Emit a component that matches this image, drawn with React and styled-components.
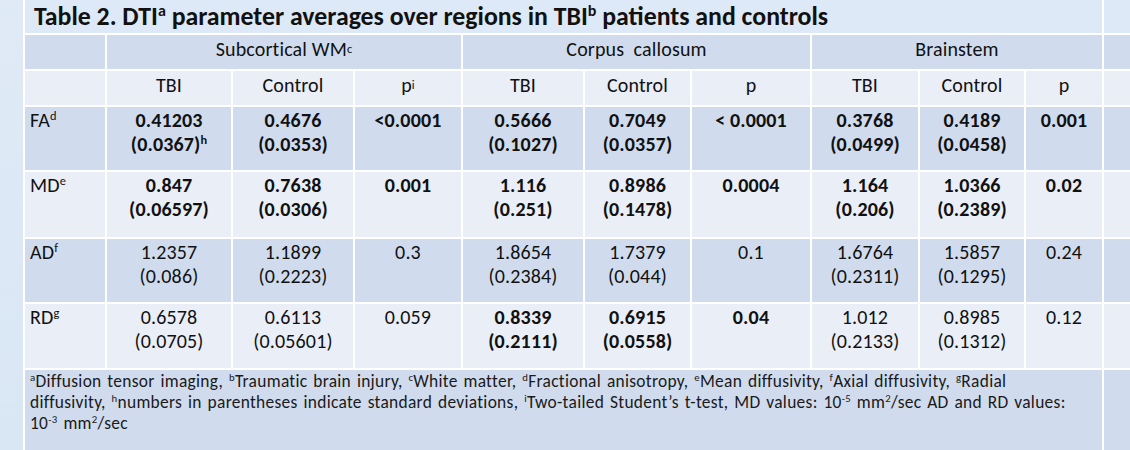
import React from "react";
import styled, { createGlobalStyle } from "styled-components";

const GlobalStyle = createGlobalStyle`
  html, body {
    margin: 0;
    padding: 0;
    background: #ffffff;
  }
  body {
    font-family: Carlito, Calibri, Lato, "Open Sans", sans-serif;
    color: #111111;
  }
`;

const DARK = "#d0dcee";
const LIGHT = "#e9eef7";

const Sheet = styled.div`
  width: 1130px;
  height: 450px;
  overflow: hidden;
  display: grid;
  grid-template-columns: 23px 80px 124px 120px 106px 120px 105px 118px 106px 104px 76px 1fr;
  grid-template-rows: 33px 34px 34px 63px 65px 63px 64px 1fr;
  gap: 2px;
  background: #ffffff;
`;

const Margin = styled.div`
  grid-column: 1;
  grid-row: 1 / -1;
  background: linear-gradient(180deg, #dfeaf6 0%, #d9e6f4 100%);
`;

const Cell = styled.div`
  background: ${(p) => (p.$dark ? DARK : LIGHT)};
  grid-column: ${(p) => p.$span || "auto"};
  font-size: 20px;
  line-height: 24px;
  letter-spacing: 0.15px;
  text-align: ${(p) => (p.$left ? "left" : "center")};
  font-weight: ${(p) => (p.$bold ? 700 : 400)};
  padding: ${(p) => (p.$top ? "1px 5px 0" : "0 5px 6px")};
  display: ${(p) => (p.$top ? "block" : "flex")};
  align-items: center;
  justify-content: ${(p) => (p.$left ? "flex-start" : "center")};
  white-space: nowrap;
`;

const Title = styled.div`
  grid-column: 2 / 12;
  background: #dde9f6;
  font-weight: 700;
  font-size: 25.8px;
  line-height: 33px;
  padding-left: 9px;
  white-space: nowrap;
`;

const Edge = styled.div`
  background: ${(p) => p.$bg};
`;

const Note = styled.div`
  grid-column: 2 / 12;
  background: ${DARK};
  font-size: 17.4px;
  line-height: 21px;
  letter-spacing: 0.3px;
  word-spacing: 1.6px;
  padding: 1px 5px 0;
  color: #1a1a1a;
  white-space: nowrap;
`;

const Sup = styled.sup`
  font-size: 0.62em;
  line-height: 0;
  vertical-align: 0.55em;
  font-weight: inherit;
`;

const groups = [
  { name: "Subcortical WM", sup: "c", span: "3 / 6" },
  { name: "Corpus  callosum", span: "6 / 9" },
  { name: "Brainstem", span: "9 / 12" },
];

const subHeads = [
  ["TBI"], ["Control"], ["p", "i"],
  ["TBI"], ["Control"], ["p"],
  ["TBI"], ["Control"], ["p"],
];

const rows = [
  {
    label: "FA", sup: "d", dark: true,
    cells: [
      { v: "0.41203", sd: "(0.0367)", sdSup: "h", b: true },
      { v: "0.4676", sd: "(0.0353)", b: true },
      { v: "<0.0001", b: true },
      { v: "0.5666", sd: "(0.1027)", b: true },
      { v: "0.7049", sd: "(0.0357)", b: true },
      { v: "< 0.0001", b: true },
      { v: "0.3768", sd: "(0.0499)", b: true },
      { v: "0.4189", sd: "(0.0458)", b: true },
      { v: "0.001", b: true },
    ],
  },
  {
    label: "MD", sup: "e",
    cells: [
      { v: "0.847", sd: "(0.06597)", b: true },
      { v: "0.7638", sd: "(0.0306)", b: true },
      { v: "0.001", b: true },
      { v: "1.116", sd: "(0.251)", b: true },
      { v: "0.8986", sd: "(0.1478)", b: true },
      { v: "0.0004", b: true },
      { v: "1.164", sd: "(0.206)", b: true },
      { v: "1.0366", sd: "(0.2389)", b: true },
      { v: "0.02", b: true },
    ],
  },
  {
    label: "AD", sup: "f", dark: true,
    cells: [
      { v: "1.2357", sd: "(0.086)" },
      { v: "1.1899", sd: "(0.2223)" },
      { v: "0.3" },
      { v: "1.8654", sd: "(0.2384)" },
      { v: "1.7379", sd: "(0.044)" },
      { v: "0.1" },
      { v: "1.6764", sd: "(0.2311)" },
      { v: "1.5857", sd: "(0.1295)" },
      { v: "0.24" },
    ],
  },
  {
    label: "RD", sup: "g",
    cells: [
      { v: "0.6578", sd: "(0.0705)" },
      { v: "0.6113", sd: "(0.05601)" },
      { v: "0.059" },
      { v: "0.8339", sd: "(0.2111)", b: true },
      { v: "0.6915", sd: "(0.0558)", b: true },
      { v: "0.04", b: true },
      { v: "1.012", sd: "(0.2133)" },
      { v: "0.8985", sd: "(0.1312)" },
      { v: "0.12" },
    ],
  },
];

export default function App() {
  return (
    <>
      <GlobalStyle />
      <Sheet>
        <Margin />
        <Title>
          Table 2. DTI<Sup>a</Sup> parameter averages over regions in TBI<Sup>b</Sup> patients and controls
        </Title>
        <Edge $bg="#dde9f6" />

        <Cell $dark />
        {groups.map((g) => (
          <Cell key={g.name} $dark $span={g.span} style={{ whiteSpace: "pre" }}>
            {g.name}
            {g.sup && <Sup>{g.sup}</Sup>}
          </Cell>
        ))}
        <Edge $bg={DARK} />

        <Cell />
        {subHeads.map(([t, s], i) => (
          <Cell key={i}>
            {t}
            {s && <Sup>{s}</Sup>}
          </Cell>
        ))}
        <Edge $bg={LIGHT} />

        {rows.map((r) => (
          <React.Fragment key={r.label}>
            <Cell $dark={r.dark} $left $top>
              {r.label}
              <Sup>{r.sup}</Sup>
            </Cell>
            {r.cells.map((c, i) => (
              <Cell key={i} $dark={r.dark} $top $bold={c.b}>
                {c.v}
                {c.sd && <br />}
                {c.sd}
                {c.sdSup && <Sup>{c.sdSup}</Sup>}
              </Cell>
            ))}
            <Edge $bg={r.dark ? DARK : LIGHT} />
          </React.Fragment>
        ))}

        <Note>
          <Sup>a</Sup>Diffusion tensor imaging, <Sup>b</Sup>Traumatic brain injury, <Sup>c</Sup>White matter,{" "}
          <Sup>d</Sup>Fractional anisotropy, <Sup>e</Sup>Mean diffusivity, <Sup>f</Sup>Axial diffusivity,{" "}
          <Sup>g</Sup>Radial
          <br />
          diffusivity, <Sup>h</Sup>numbers in parentheses indicate standard deviations, <Sup>i</Sup>Two-tailed
          Student’s t-test, MD values: 10<Sup>-5</Sup> mm<Sup>2</Sup>/sec AD and RD values:
          <br />
          10<Sup>-3</Sup> mm<Sup>2</Sup>/sec
        </Note>
        <Edge $bg={DARK} />
      </Sheet>
    </>
  );
}
